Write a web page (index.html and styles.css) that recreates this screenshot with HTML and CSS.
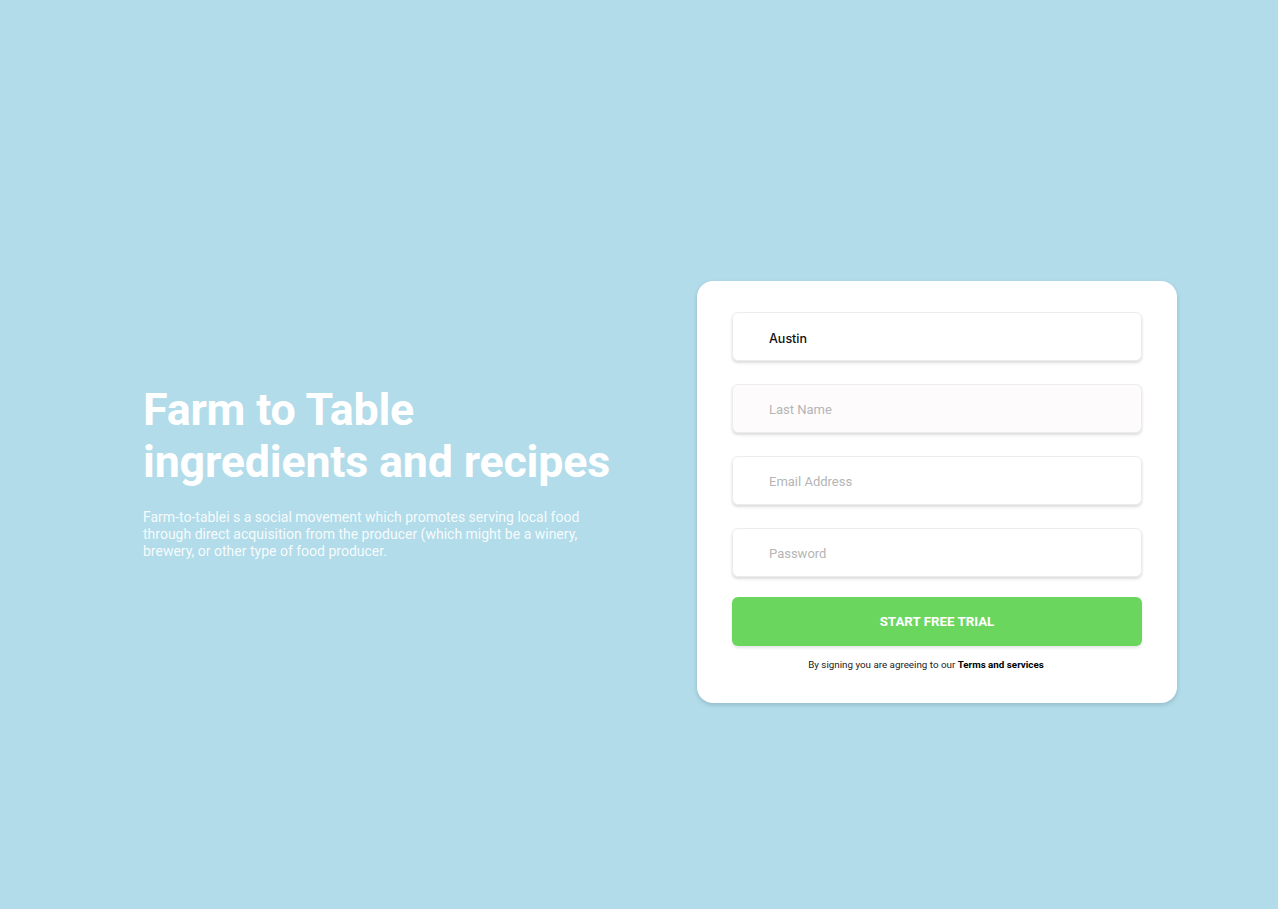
FILE: index.html
```html
<!DOCTYPE html>
<html lang="en">
<head>
<meta charset="utf-8">
<title>Farm to Table</title>
<link rel="stylesheet" href="styles.css">
</head>
<body>
<main class="page">
  <section class="intro">
    <h1 class="title">Farm to Table<br>ingredients and recipes</h1>
    <p class="lead">Farm-to-tablei s a social movement which promotes serving local food through direct acquisition from the producer (which might be a winery, brewery, or other type of food producer.</p>
  </section>
  <form class="card">
    <div class="field"><span class="value">Austin</span></div>
    <div class="field field-tint"><span class="placeholder">Last Name</span></div>
    <div class="field"><span class="placeholder">Email Address</span></div>
    <div class="field field-last"><span class="placeholder">Password</span></div>
    <button type="button" class="cta">START FREE TRIAL</button>
    <p class="terms">By signing you are agreeing to our <strong>Terms and services</strong></p>
  </form>
</main>
</body>
</html>
```
FILE: styles.css
```css
* { box-sizing: border-box; }
html, body { margin: 0; padding: 0; }
body {
  background: #b2dcea;
  font-family: Roboto, "Liberation Sans", sans-serif;
}
.page {
  height: 909px;
  display: flex;
  align-items: flex-start;
  padding: 281px 0 0 143px;
}
.intro {
  width: 480px;
  margin-top: 103px;
  color: #fff;
}
.title {
  margin: 0;
  font-size: 44.8px;
  line-height: 52px;
  font-weight: 700;
  letter-spacing: -0.2px;
}
.lead {
  margin: 21px 0 0;
  font-size: 14px;
  line-height: 17px;
  color: rgba(255,255,255,0.9);
  width: 460px;
}
.card {
  margin-left: 74px;
  width: 480px;
  background: #fff;
  border-radius: 16px;
  box-shadow: 0 2px 4px rgba(60,90,100,0.25);
  padding: 31px 35px 33px;
  display: flex;
  flex-direction: column;
}
.field {
  height: 49px;
  border: 1px solid #ececec;
  border-radius: 6px;
  background: #fff;
  box-shadow: 0 2px 3px rgba(0,0,0,0.14);
  display: flex;
  align-items: center;
  padding: 1px 0 0 36px;
  margin-bottom: 23px;
  font-size: 13px;
}
.field-tint { background: #fdfbfc; }
.field-last { margin-bottom: 20px; }
.value { color: #111; font-family: Inter, Roboto, sans-serif; font-size: 12.5px; font-weight: 500; padding-top: 2px; }
.placeholder { color: #b5b5b5; }
.cta {
  height: 49px;
  border: 0;
  border-radius: 6px;
  background: #6ad65e;
  color: #fff;
  font-family: Roboto, sans-serif;
  font-weight: 700;
  font-size: 13.3px;
  box-shadow: 0 2px 3px rgba(0,0,0,0.1);
  cursor: pointer;
}
.terms {
  margin: 13px 0 0;
  padding-right: 22px;
  text-align: center;
  font-size: 9.8px;
  color: #222;
}
.terms strong { color: #000; font-weight: 700; }
```
